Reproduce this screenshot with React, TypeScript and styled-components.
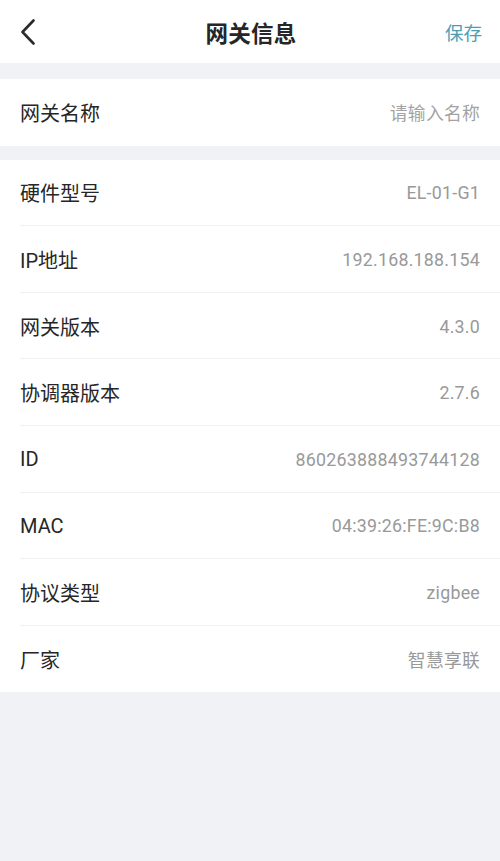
import React from "react";
import styled, { createGlobalStyle } from "styled-components";

const GlobalStyle = createGlobalStyle`
	html, body {
		margin: 0;
		padding: 0;
		background: #f1f2f5;
	}
	body {
		font-family: Roboto, "Noto Sans CJK SC", sans-serif;
		-webkit-font-smoothing: antialiased;
	}
`;

const Page = styled.div`
	background: #f1f2f5;
	min-height: 861px;
	width: 500px;
	display: flex;
	flex-direction: column;
	gap: 16px;
`;

const Header = styled.header`
	background: #fff;
	height: 63px;
	display: grid;
	grid-template-columns: 80px 1fr 80px;
	align-items: center;
	padding: 0 18px 0 20px;
	box-sizing: border-box;
`;

const BackButton = styled.button`
	border: none;
	background: none;
	padding: 0;
	width: 20px;
	height: 30px;
	display: flex;
	align-items: center;
	justify-self: start;
	color: #2b2b2b;
`;

const Title = styled.h1`
	margin: 0;
	text-align: center;
	font-size: 22.5px;
	font-weight: 700;
	color: #262626;
	letter-spacing: 0.3px;
`;

const SaveButton = styled.button`
	border: none;
	background: none;
	padding: 0;
	justify-self: end;
	font-family: inherit;
	font-size: 18.5px;
	color: #4b9db6;
`;

const Sections = styled.div`
	display: flex;
	flex-direction: column;
	gap: 14px;
`;

const Card = styled.section`
	background: #fff;
	display: flex;
	flex-direction: column;
`;

const Row = styled.div<{ $divider?: boolean }>`
	height: 66.6px;
	display: flex;
	align-items: center;
	justify-content: space-between;
	padding: 0 20px;
	position: relative;
	box-sizing: border-box;

	${({ $divider }) =>
		$divider &&
		`
		&::after {
			content: "";
			position: absolute;
			left: 20px;
			right: 0;
			bottom: 0;
			height: 1px;
			background: #f1f1f3;
		}
	`}
`;

const Label = styled.span`
	font-size: 20px;
	color: #262626;
`;

const Value = styled.span<{ $placeholder?: boolean }>`
	font-size: 17.8px;
	letter-spacing: 0.25px;
	color: ${({ $placeholder }) => ($placeholder ? "#a3a3a3" : "#999999")};
`;

const infoRows = [
	{ label: "硬件型号", value: "EL-01-G1" },
	{ label: "IP地址", value: "192.168.188.154" },
	{ label: "网关版本", value: "4.3.0" },
	{ label: "协调器版本", value: "2.7.6" },
	{ label: "ID", value: "860263888493744128" },
	{ label: "MAC", value: "04:39:26:FE:9C:B8" },
	{ label: "协议类型", value: "zigbee" },
	{ label: "厂家", value: "智慧享联" },
];

const BackIcon = () => (
	<svg width="16" height="26" viewBox="0 0 16 26" fill="none">
		<path
			d="M13.5 1.5 L2.5 13 L13.5 24.5"
			stroke="currentColor"
			strokeWidth="2.6"
			strokeLinecap="round"
			strokeLinejoin="round"
		/>
	</svg>
);

const App = () => {
	return (
		<>
			<GlobalStyle />
			<Page>
				<Header>
					<BackButton aria-label="返回">
						<BackIcon />
					</BackButton>
					<Title>网关信息</Title>
					<SaveButton>保存</SaveButton>
				</Header>
				<Sections>
					<Card>
						<Row>
							<Label>网关名称</Label>
							<Value $placeholder>请输入名称</Value>
						</Row>
					</Card>
					<Card>
						{infoRows.map((row, i) => (
							<Row key={row.label} $divider={i < infoRows.length - 1}>
								<Label>{row.label}</Label>
								<Value>{row.value}</Value>
							</Row>
						))}
					</Card>
				</Sections>
			</Page>
		</>
	);
};

export default App;
